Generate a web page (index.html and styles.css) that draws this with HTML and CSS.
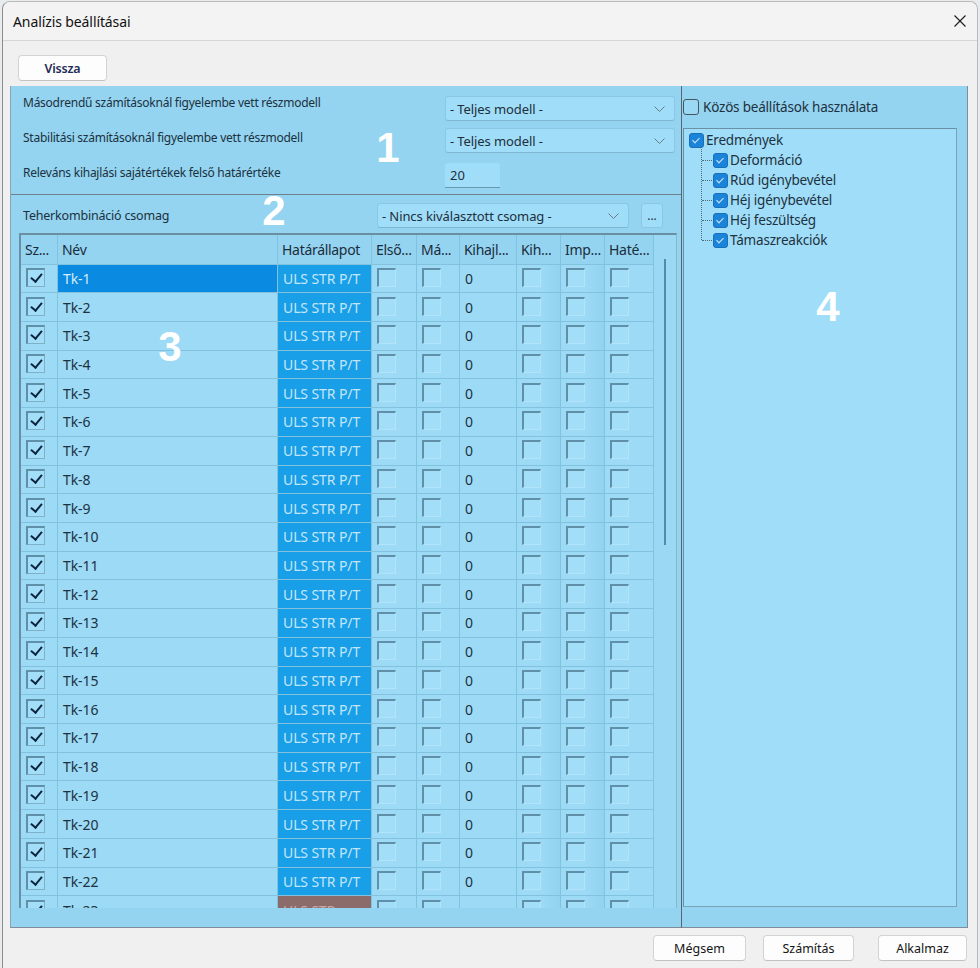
FILE: index.html
```html
<!DOCTYPE html>
<html lang="hu">
<head>
<meta charset="utf-8">
<title>Analízis beállításai</title>
<link rel="stylesheet" href="styles.css">
</head>
<body>
<div class="window">
  <div class="titlebar">
    <span class="title">Analízis beállításai</span>
    <svg class="close" width="12" height="12" viewBox="0 0 12 12"><path d="M0.5 0.5 L11.5 11.5 M11.5 0.5 L0.5 11.5" stroke="#1a1a1a" stroke-width="1.1" fill="none"/></svg>
  </div>
  <div class="toolbar">
    <button class="btn btn-back">Vissza</button>
  </div>
  <div class="main">
    <div class="left">
      <div class="sec1">
        <span class="lbl lbl-a">Másodrendű számításoknál figyelembe vett részmodell</span>
        <div class="combo"><span>- Teljes modell -</span><svg class="chev" width="11" height="6" viewBox="0 0 11 6"><path d="M0.5 0.5 L5.5 5.5 L10.5 0.5" stroke="#6b7b84" fill="none"/></svg></div>
        <span class="lbl lbl-b">Stabilitási számításoknál figyelembe vett részmodell</span>
        <div class="combo"><span>- Teljes modell -</span><svg class="chev" width="11" height="6" viewBox="0 0 11 6"><path d="M0.5 0.5 L5.5 5.5 L10.5 0.5" stroke="#6b7b84" fill="none"/></svg></div>
        <span class="lbl lbl-c">Releváns kihajlási sajátértékek felső határértéke</span>
        <div class="input">20</div>
      </div>
      <div class="sec2">
        <span class="lbl2">Teherkombináció csomag</span>
        <div class="combo combo-pack"><span>- Nincs kiválasztott csomag -</span><svg class="chev" width="11" height="6" viewBox="0 0 11 6"><path d="M0.5 0.5 L5.5 5.5 L10.5 0.5" stroke="#6b7b84" fill="none"/></svg></div>
        <div class="dots">...</div>
      </div>
      <div class="tablewrap">
        <div class="grid">
          <div class="row head">
            <div class="c">Sz...</div><div class="c">Név</div><div class="c">Határállapot</div><div class="c">Első...</div><div class="c">Má...</div><div class="c">Kihajl...</div><div class="c">Kih...</div><div class="c">Imp...</div><div class="c">Haté...</div>
          </div>
          <div class="row"><div class="c"><span class="cb on"></span></div><div class="c name sel">Tk-1</div><div class="c lim">ULS STR P/T</div><div class="c"><span class="cb"></span></div><div class="c"><span class="cb"></span></div><div class="c">0</div><div class="c dk"><span class="cb"></span></div><div class="c dk"><span class="cb"></span></div><div class="c"><span class="cb"></span></div></div>
          <div class="row"><div class="c"><span class="cb on"></span></div><div class="c name">Tk-2</div><div class="c lim">ULS STR P/T</div><div class="c"><span class="cb"></span></div><div class="c"><span class="cb"></span></div><div class="c">0</div><div class="c dk"><span class="cb"></span></div><div class="c dk"><span class="cb"></span></div><div class="c"><span class="cb"></span></div></div>
          <div class="row"><div class="c"><span class="cb on"></span></div><div class="c name">Tk-3</div><div class="c lim">ULS STR P/T</div><div class="c"><span class="cb"></span></div><div class="c"><span class="cb"></span></div><div class="c">0</div><div class="c dk"><span class="cb"></span></div><div class="c dk"><span class="cb"></span></div><div class="c"><span class="cb"></span></div></div>
          <div class="row"><div class="c"><span class="cb on"></span></div><div class="c name">Tk-4</div><div class="c lim">ULS STR P/T</div><div class="c"><span class="cb"></span></div><div class="c"><span class="cb"></span></div><div class="c">0</div><div class="c dk"><span class="cb"></span></div><div class="c dk"><span class="cb"></span></div><div class="c"><span class="cb"></span></div></div>
          <div class="row"><div class="c"><span class="cb on"></span></div><div class="c name">Tk-5</div><div class="c lim">ULS STR P/T</div><div class="c"><span class="cb"></span></div><div class="c"><span class="cb"></span></div><div class="c">0</div><div class="c dk"><span class="cb"></span></div><div class="c dk"><span class="cb"></span></div><div class="c"><span class="cb"></span></div></div>
          <div class="row"><div class="c"><span class="cb on"></span></div><div class="c name">Tk-6</div><div class="c lim">ULS STR P/T</div><div class="c"><span class="cb"></span></div><div class="c"><span class="cb"></span></div><div class="c">0</div><div class="c dk"><span class="cb"></span></div><div class="c dk"><span class="cb"></span></div><div class="c"><span class="cb"></span></div></div>
          <div class="row"><div class="c"><span class="cb on"></span></div><div class="c name">Tk-7</div><div class="c lim">ULS STR P/T</div><div class="c"><span class="cb"></span></div><div class="c"><span class="cb"></span></div><div class="c">0</div><div class="c dk"><span class="cb"></span></div><div class="c dk"><span class="cb"></span></div><div class="c"><span class="cb"></span></div></div>
          <div class="row"><div class="c"><span class="cb on"></span></div><div class="c name">Tk-8</div><div class="c lim">ULS STR P/T</div><div class="c"><span class="cb"></span></div><div class="c"><span class="cb"></span></div><div class="c">0</div><div class="c dk"><span class="cb"></span></div><div class="c dk"><span class="cb"></span></div><div class="c"><span class="cb"></span></div></div>
          <div class="row"><div class="c"><span class="cb on"></span></div><div class="c name">Tk-9</div><div class="c lim">ULS STR P/T</div><div class="c"><span class="cb"></span></div><div class="c"><span class="cb"></span></div><div class="c">0</div><div class="c dk"><span class="cb"></span></div><div class="c dk"><span class="cb"></span></div><div class="c"><span class="cb"></span></div></div>
          <div class="row"><div class="c"><span class="cb on"></span></div><div class="c name">Tk-10</div><div class="c lim">ULS STR P/T</div><div class="c"><span class="cb"></span></div><div class="c"><span class="cb"></span></div><div class="c">0</div><div class="c dk"><span class="cb"></span></div><div class="c dk"><span class="cb"></span></div><div class="c"><span class="cb"></span></div></div>
          <div class="row"><div class="c"><span class="cb on"></span></div><div class="c name">Tk-11</div><div class="c lim">ULS STR P/T</div><div class="c"><span class="cb"></span></div><div class="c"><span class="cb"></span></div><div class="c">0</div><div class="c dk"><span class="cb"></span></div><div class="c dk"><span class="cb"></span></div><div class="c"><span class="cb"></span></div></div>
          <div class="row"><div class="c"><span class="cb on"></span></div><div class="c name">Tk-12</div><div class="c lim">ULS STR P/T</div><div class="c"><span class="cb"></span></div><div class="c"><span class="cb"></span></div><div class="c">0</div><div class="c dk"><span class="cb"></span></div><div class="c dk"><span class="cb"></span></div><div class="c"><span class="cb"></span></div></div>
          <div class="row"><div class="c"><span class="cb on"></span></div><div class="c name">Tk-13</div><div class="c lim">ULS STR P/T</div><div class="c"><span class="cb"></span></div><div class="c"><span class="cb"></span></div><div class="c">0</div><div class="c dk"><span class="cb"></span></div><div class="c dk"><span class="cb"></span></div><div class="c"><span class="cb"></span></div></div>
          <div class="row"><div class="c"><span class="cb on"></span></div><div class="c name">Tk-14</div><div class="c lim">ULS STR P/T</div><div class="c"><span class="cb"></span></div><div class="c"><span class="cb"></span></div><div class="c">0</div><div class="c dk"><span class="cb"></span></div><div class="c dk"><span class="cb"></span></div><div class="c"><span class="cb"></span></div></div>
          <div class="row"><div class="c"><span class="cb on"></span></div><div class="c name">Tk-15</div><div class="c lim">ULS STR P/T</div><div class="c"><span class="cb"></span></div><div class="c"><span class="cb"></span></div><div class="c">0</div><div class="c dk"><span class="cb"></span></div><div class="c dk"><span class="cb"></span></div><div class="c"><span class="cb"></span></div></div>
          <div class="row"><div class="c"><span class="cb on"></span></div><div class="c name">Tk-16</div><div class="c lim">ULS STR P/T</div><div class="c"><span class="cb"></span></div><div class="c"><span class="cb"></span></div><div class="c">0</div><div class="c dk"><span class="cb"></span></div><div class="c dk"><span class="cb"></span></div><div class="c"><span class="cb"></span></div></div>
          <div class="row"><div class="c"><span class="cb on"></span></div><div class="c name">Tk-17</div><div class="c lim">ULS STR P/T</div><div class="c"><span class="cb"></span></div><div class="c"><span class="cb"></span></div><div class="c">0</div><div class="c dk"><span class="cb"></span></div><div class="c dk"><span class="cb"></span></div><div class="c"><span class="cb"></span></div></div>
          <div class="row"><div class="c"><span class="cb on"></span></div><div class="c name">Tk-18</div><div class="c lim">ULS STR P/T</div><div class="c"><span class="cb"></span></div><div class="c"><span class="cb"></span></div><div class="c">0</div><div class="c dk"><span class="cb"></span></div><div class="c dk"><span class="cb"></span></div><div class="c"><span class="cb"></span></div></div>
          <div class="row"><div class="c"><span class="cb on"></span></div><div class="c name">Tk-19</div><div class="c lim">ULS STR P/T</div><div class="c"><span class="cb"></span></div><div class="c"><span class="cb"></span></div><div class="c">0</div><div class="c dk"><span class="cb"></span></div><div class="c dk"><span class="cb"></span></div><div class="c"><span class="cb"></span></div></div>
          <div class="row"><div class="c"><span class="cb on"></span></div><div class="c name">Tk-20</div><div class="c lim">ULS STR P/T</div><div class="c"><span class="cb"></span></div><div class="c"><span class="cb"></span></div><div class="c">0</div><div class="c dk"><span class="cb"></span></div><div class="c dk"><span class="cb"></span></div><div class="c"><span class="cb"></span></div></div>
          <div class="row"><div class="c"><span class="cb on"></span></div><div class="c name">Tk-21</div><div class="c lim">ULS STR P/T</div><div class="c"><span class="cb"></span></div><div class="c"><span class="cb"></span></div><div class="c">0</div><div class="c dk"><span class="cb"></span></div><div class="c dk"><span class="cb"></span></div><div class="c"><span class="cb"></span></div></div>
          <div class="row"><div class="c"><span class="cb on"></span></div><div class="c name">Tk-22</div><div class="c lim">ULS STR P/T</div><div class="c"><span class="cb"></span></div><div class="c"><span class="cb"></span></div><div class="c">0</div><div class="c dk"><span class="cb"></span></div><div class="c dk"><span class="cb"></span></div><div class="c"><span class="cb"></span></div></div>
          <div class="row"><div class="c"><span class="cb on"></span></div><div class="c name">Tk-23</div><div class="c lim lim-sls">ULS STR</div><div class="c"><span class="cb"></span></div><div class="c"><span class="cb"></span></div><div class="c">-</div><div class="c dk"><span class="cb"></span></div><div class="c dk"><span class="cb"></span></div><div class="c"><span class="cb"></span></div></div>
        </div>
        <div class="vscroll"><div class="thumb"></div></div>
      </div>
      <span class="mark m1">1</span>
      <span class="mark m2">2</span>
      <span class="mark m3">3</span>
    </div>
    <div class="right">
      <label class="common"><span class="rcb"></span><span>Közös beállítások használata</span></label>
      <div class="tree">
        <div class="node root"><span class="tcb"></span><span>Eredmények</span></div>
        <div class="children">
          <div class="node child"><span class="tcb"></span><span>Deformáció</span></div>
          <div class="node child"><span class="tcb"></span><span>Rúd igénybevétel</span></div>
          <div class="node child"><span class="tcb"></span><span>Héj igénybevétel</span></div>
          <div class="node child"><span class="tcb"></span><span>Héj feszültség</span></div>
          <div class="node child last"><span class="tcb"></span><span>Támaszreakciók</span></div>
        </div>
      </div>
      <span class="mark m4">4</span>
    </div>
  </div>
  <div class="footer">
    <button class="btn btn-cancel">Mégsem</button>
    <button class="btn btn-calc">Számítás</button>
    <button class="btn btn-apply">Alkalmaz</button>
  </div>
</div>
</body>
</html>
```

FILE: styles.css
```css
* { box-sizing: border-box; }
html, body { margin: 0; padding: 0; }
body {
  background: #e9ecee;
  font-family: "Noto Sans", "Open Sans", sans-serif;
  color: #1d3140;
  width: 980px;
  height: 968px;
  overflow: hidden;
}
.window {
  margin: 1px 0 0 2px;
  width: 976px;
  height: 967px;
  background: #f0f0f0;
  border-left: 1px solid #8c8c8c;
  border-top: 1px solid #b9b9b9;
  border-right: 1px solid #b9b9b9;
  border-radius: 8px 8px 0 0;
  display: flex;
  flex-direction: column;
}
.titlebar {
  height: 39px;
  flex: none;
  background: #f3f3f3;
  border-bottom: 1px solid #d6d6d6;
  border-radius: 8px 8px 0 0;
  display: flex;
  align-items: center;
  justify-content: space-between;
  padding: 0 11px 0 10px;
}
.title {
  font-size: 14px;
  color: #111;
  letter-spacing: -0.1px;
}
.close { display: block; }
.toolbar {
  height: 45px;
  flex: none;
  padding: 14px 0 0 15px;
}
.btn {
  font-family: "Noto Sans", "Open Sans", sans-serif;
  font-size: 12.5px;
  color: #151515;
  background: #fdfdfd;
  border: 1px solid #d3d3d3;
  border-bottom-color: #c2c2c2;
  border-radius: 4px;
  height: 26px;
  padding: 0;
  display: flex;
  align-items: center;
  justify-content: center;
}
.btn-back { width: 89px; font-weight: 600; color: #1f2c55; letter-spacing: -0.2px; }
.main {
  height: 842px;
  flex: none;
  margin-left: 7px;
  width: 958px;
  display: flex;
}
.left {
  position: relative;
  width: 672px;
  flex: none;
  background: #94d4f0;
  border-left: 1px solid #8ba3af;
  border-right: 1px solid #56656d;
  border-bottom: 1px solid #7d8e98;
  display: flex;
  flex-direction: column;
}
.sec1 {
  height: 109px;
  flex: none;
  border-bottom: 1px solid #6c818c;
  display: grid;
  grid-template-columns: 1fr 230px;
  grid-template-rows: 25px 25px 25px;
  row-gap: 7px;
  padding: 10px 6px 0 12px;
  align-items: start;
}
.sec1 .input { grid-column: 2; }
.lbl {
  font-size: 12px;
  line-height: 16px;
  letter-spacing: -0.25px;
  white-space: nowrap;
  color: #1b3140;
}
.lbl-a { margin-top: -1px; }
.lbl-b { margin-top: 2px; }
.lbl-c { margin-top: 5px; }
.sec1 .input { margin-top: 3px; }
.combo {
  height: 25px;
  background: #a0ddf8;
  border: 1px solid #8cc6e2;
  border-bottom-color: #7fb6d0;
  border-radius: 3px;
  display: flex;
  align-items: center;
  justify-content: space-between;
  padding: 0 9px 0 4px;
  font-size: 13px;
  letter-spacing: -0.1px;
  color: #1d2f3c;
}
.chev { display: block; }
.input {
  width: 55px;
  height: 25px;
  background: #a0ddf8;
  border-radius: 3px 3px 0 0;
  border-bottom: 1px solid #6b98ae;
  font-size: 13px;
  display: flex;
  align-items: center;
  padding-left: 5px;
  color: #1d2f3c;
}
.sec2 {
  height: 38px;
  flex: none;
  display: flex;
  align-items: flex-start;
  padding: 8px 18px 0 12px;
}
.lbl2 {
  flex: 1;
  font-size: 12.5px;
  letter-spacing: -0.2px;
  line-height: 16px;
  margin-top: 5px;
  color: #1b3140;
}
.combo-pack { width: 252px; }
.dots {
  width: 22px;
  height: 25px;
  margin-left: 12px;
  background: #a0ddf8;
  border: 1px solid #8cc6e2;
  border-radius: 3px;
  font-size: 12px;
  text-align: center;
  line-height: 24px;
  color: #1d2f3c;
}
.tablewrap {
  height: 675px;
  flex: none;
  margin-left: 8px;
  width: 658px;
  border-top: 2px solid #6a8fa2;
  border-left: 2px solid #6a8fa2;
  border-right: 1px solid #8ab8ce;
  display: flex;
  overflow: hidden;
}
.grid { width: 633px; flex: none; }
.row {
  display: grid;
  grid-template-columns: 37px 220px 94px 45px 43px 57px 44px 44px 49px;
  height: 28.72px;
}
.row.head { height: 29.5px; }
.c {
  border-right: 1px solid #82c2df;
  border-bottom: 1px solid #82c2df;
  background: #9cdaf6;
  font-size: 14px;
  letter-spacing: -0.1px;
  display: flex;
  align-items: center;
  padding-left: 5px;
  white-space: nowrap;
  overflow: hidden;
  color: #1d3140;
}
.head .c {
  background: #95d4f1;
  padding-left: 4px;
  color: #1a2d3b;
  letter-spacing: -0.3px;
}
.c.dk { background: linear-gradient(90deg, #9cdaf6 55%, #93d2ef 100%); }
.name { padding-left: 5px; }
.name.sel { background: #0a8ae0; color: #d4ecfa; }
.lim { background: #189fe7; color: #c4e6f8; padding-left: 5px; }
.lim-sls { background: #8c6b6b; color: #c9a9a5; }
.cb {
  position: relative;
  width: 19px;
  height: 19px;
  background: #a3def8;
  border-top: 2px solid #5f90a8;
  border-left: 2px solid #5f90a8;
  border-right: 1px solid #b4e4f9;
  border-bottom: 1px solid #b4e4f9;
  margin-bottom: 2px;
}
.cb.on { border-right-color: #7fb0c8; border-bottom-color: #7fb0c8; }
.cb.on::after {
  content: "";
  position: absolute;
  left: 5px;
  top: 1px;
  width: 5px;
  height: 9px;
  border-right: 2.5px solid #0d2540;
  border-bottom: 2.5px solid #0d2540;
  transform: rotate(40deg);
}
.vscroll {
  width: 22px;
  flex: none;
  background: #9ad8f4;
  position: relative;
  padding: 24px 0 0 10px;
}
.thumb {
  width: 2px;
  height: 286px;
  background: #4f8daf;
}
.mark {
  position: absolute;
  width: 40px;
  text-align: center;
  font-family: "Liberation Sans", Arial, sans-serif;
  font-weight: 700;
  font-size: 42px;
  line-height: 42px;
  color: #ffffff;
}
.m1 { left: 357px; top: 41px; }
.m2 { left: 243px; top: 104px; }
.m3 { left: 139px; top: 240px; }
.m4 { left: 126px; top: 200px; }
.right {
  position: relative;
  width: 286px;
  flex: none;
  background: #94d4f0;
  border-right: 1px solid #7d8e98;
  border-bottom: 1px solid #7d8e98;
  padding: 13px 0 0 1px;
}
.common {
  display: flex;
  align-items: center;
  height: 15px;
  font-size: 13.5px;
  letter-spacing: -0.2px;
  color: #1d3140;
}
.rcb {
  width: 16px;
  height: 16px;
  border: 1px solid #46555e;
  border-radius: 3px;
  margin-right: 4px;
  background: #9ad8f4;
}
.tree {
  margin-top: 14px;
  width: 274px;
  height: 779px;
  background: #a0ddf8;
  border: 1px solid #7aa3b8;
  border-top-color: #6a90a4;
  border-left-color: #6a90a4;
  padding: 1px 0 0 5px;
}
.node {
  display: flex;
  align-items: center;
  height: 20px;
  font-size: 13.5px;
  letter-spacing: -0.2px;
  color: #1d3140;
}
.tcb {
  position: relative;
  width: 15px;
  height: 15px;
  border-radius: 3px;
  background: #1c84d8;
  border: 1px solid #1670bb;
  margin-right: 2px;
  flex: none;
}
.tcb::after {
  content: "";
  position: absolute;
  left: 4px;
  top: 2px;
  width: 3px;
  height: 6px;
  border-right: 1.2px solid #cfe8fa;
  border-bottom: 1.2px solid #cfe8fa;
  transform: rotate(45deg);
}
.children { margin-left: 12px; }
.child {
  position: relative;
  padding-left: 12px;
}
.child::before {
  content: "";
  position: absolute;
  left: 0;
  top: -3px;
  bottom: 0;
  border-left: 1px dotted #4e6b7a;
}
.child.last::before { bottom: 10px; }
.child::after {
  content: "";
  position: absolute;
  left: 1px;
  top: 10px;
  width: 10px;
  border-top: 1px dotted #4e6b7a;
}
.footer {
  flex: 1;
  display: flex;
  justify-content: flex-end;
  padding: 7px 10px 0 0;
}
.btn-cancel { width: 93px; }
.btn-calc { width: 91px; margin-left: 17px; }
.btn-apply { width: 89px; margin-left: 24px; }
```
